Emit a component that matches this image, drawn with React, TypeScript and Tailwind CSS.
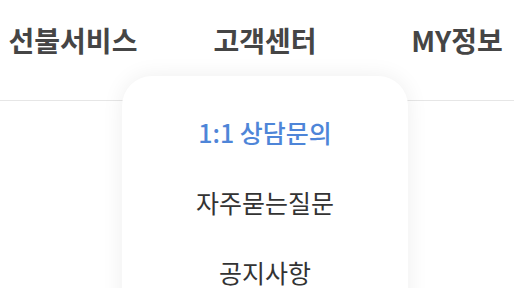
import React from "react";

const navItems = ["선불서비스", "고객센터", "MY정보"];

const subMenu = [
  { label: "1:1 상담문의", active: true },
  { label: "자주묻는질문", active: false },
  { label: "공지사항", active: false },
];

export default function App() {
  return (
    <div
      className="relative w-[514px] h-[288px] overflow-hidden bg-white"
      style={{ fontFamily: '"Noto Sans CJK KR", "Noto Sans", sans-serif' }}
    >
      <header className="h-[101px] pb-[20px] border-b border-[#e6e6e6]">
        <nav className="grid grid-cols-[146px_146px_146px] gap-x-[46px] h-full items-center">
          {navItems.map((item) => (
            <div
              key={item}
              className="text-center text-[28px] font-bold text-[#454545] whitespace-nowrap"
            >
              {item}
            </div>
          ))}
        </nav>
      </header>

      {/* dropdown for 고객센터 */}
      <div className="absolute left-[122px] top-[76px] w-[286px] h-[260px] rounded-[30px] bg-white shadow-[0_0_22px_rgba(0,0,0,0.07)] pt-[22px]">
        <ul className="flex flex-col">
          {subMenu.map((m) => (
            <li
              key={m.label}
              className={
                "h-[70px] flex items-center justify-center text-[25px] whitespace-nowrap " +
                (m.active ? "text-[#4e85d8] font-medium" : "text-[#333333]")
              }
            >
              {m.label}
            </li>
          ))}
        </ul>
      </div>
    </div>
  );
}
